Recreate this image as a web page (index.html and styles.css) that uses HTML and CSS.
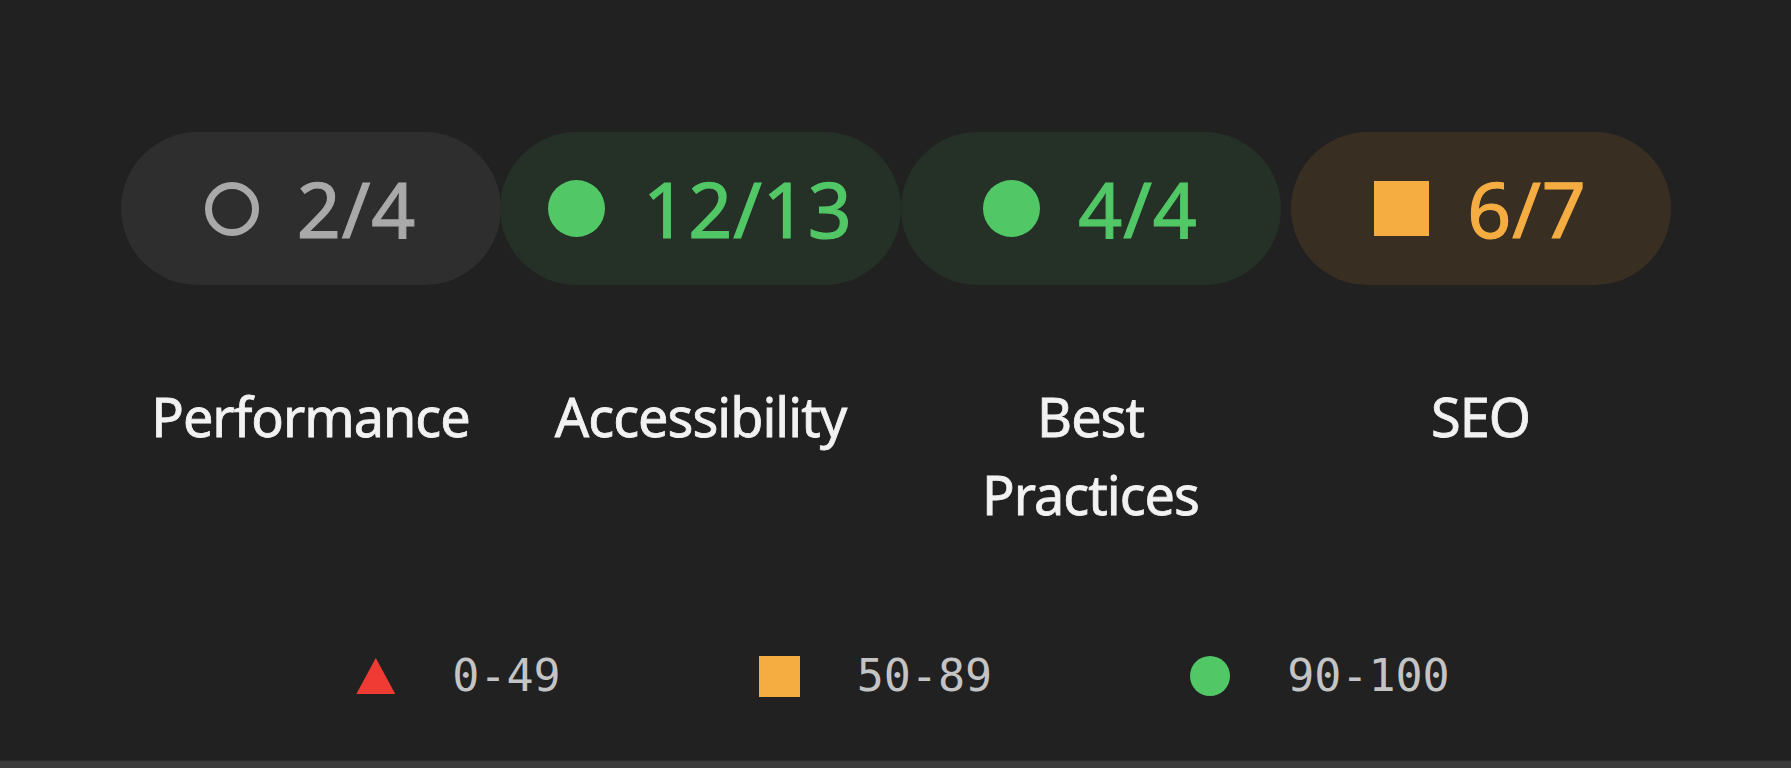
FILE: index.html
```html
<!DOCTYPE html>
<html lang="en">
<head>
<meta charset="utf-8">
<title>Scores</title>
<link rel="stylesheet" href="styles.css">
</head>
<body>
<div class="page">
  <main class="main">
    <div class="grid">
      <div class="col">
        <div class="pill pill-gray"><span class="ring"></span><span class="score">2/4</span></div>
        <div class="label">Performance</div>
      </div>
      <div class="col">
        <div class="pill pill-green"><span class="dot"></span><span class="score">12/13</span></div>
        <div class="label">Accessibility</div>
      </div>
      <div class="col">
        <div class="pill pill-green"><span class="dot"></span><span class="score">4/4</span></div>
        <div class="label">Best Practices</div>
      </div>
      <div class="col">
        <div class="pill pill-orange"><span class="sq"></span><span class="score">6/7</span></div>
        <div class="label">SEO</div>
      </div>
    </div>
    <div class="legend">
      <div class="legend-item"><span class="lg-tri"></span><span class="lg-text">0-49</span></div>
      <div class="legend-item"><span class="lg-sq"></span><span class="lg-text">50-89</span></div>
      <div class="legend-item"><span class="lg-dot"></span><span class="lg-text">90-100</span></div>
    </div>
  </main>
  <div class="bottom-bar"></div>
</div>
</body>
</html>
```
FILE: styles.css
```css
html, body {
  margin: 0;
  padding: 0;
  background: #212121;
}
.page {
  width: 100%;
  height: 768px;
  display: flex;
  flex-direction: column;
  overflow: hidden;
}
.main {
  flex: 1;
  padding-top: 132px;
}
.grid {
  display: grid;
  grid-template-columns: repeat(4, 390px);
  justify-content: center;
}
.col {
  display: flex;
  flex-direction: column;
  align-items: center;
}
.pill {
  height: 153px;
  min-width: 380px;
  box-sizing: border-box;
  padding: 0 48px;
  border-radius: 77px;
  display: flex;
  align-items: center;
  justify-content: center;
  gap: 38px;
  font-family: "Noto Sans", "Open Sans", sans-serif;
  font-size: 77px;
  line-height: 1;
  letter-spacing: 1px;
}
.score {
  display: block;
  -webkit-text-stroke: 1.2px currentColor;
}
.pill-gray {
  background: #2e2e2e;
  color: #a9a9a9;
}
.pill-green {
  background: #253026;
  color: #51c766;
}
.pill-orange {
  background: #382e22;
  color: #f5ad42;
}
.ring {
  width: 54px;
  height: 54px;
  box-sizing: border-box;
  border: 7px solid #a9a9a9;
  border-radius: 50%;
  flex: none;
}
.dot {
  width: 57px;
  height: 57px;
  border-radius: 50%;
  background: #51c766;
  flex: none;
}
.sq {
  width: 55px;
  height: 55px;
  background: #f5ad42;
  flex: none;
}
.label {
  margin-top: 92px;
  width: 330px;
  text-align: center;
  font-family: "Noto Sans", "Open Sans", sans-serif;
  font-size: 54px;
  line-height: 78px;
  letter-spacing: -1px;
  color: #f2f2f2;
  -webkit-text-stroke: 0.8px currentColor;
}
.legend {
  margin-top: 118px;
  height: 50px;
  display: flex;
  align-items: center;
  justify-content: center;
  gap: 198px;
  padding-left: 15px;
}
.legend-item {
  display: flex;
  align-items: center;
  gap: 57px;
}
.lg-text {
  font-family: "DejaVu Sans Mono", "Liberation Mono", monospace;
  font-size: 45px;
  line-height: 50px;
  color: #c4c4c4;
}
.lg-tri {
  width: 39px;
  height: 36px;
  background: #ef3b34;
  clip-path: polygon(50% 0, 100% 100%, 0 100%);
}
.lg-sq {
  width: 41px;
  height: 41px;
  background: #f5ad42;
}
.lg-dot {
  width: 40px;
  height: 40px;
  border-radius: 50%;
  background: #51c766;
}
.bottom-bar {
  height: 7px;
  flex: none;
  background: #3c3c3c;
  border-top: 1px solid #2b2b2b;
}
```
